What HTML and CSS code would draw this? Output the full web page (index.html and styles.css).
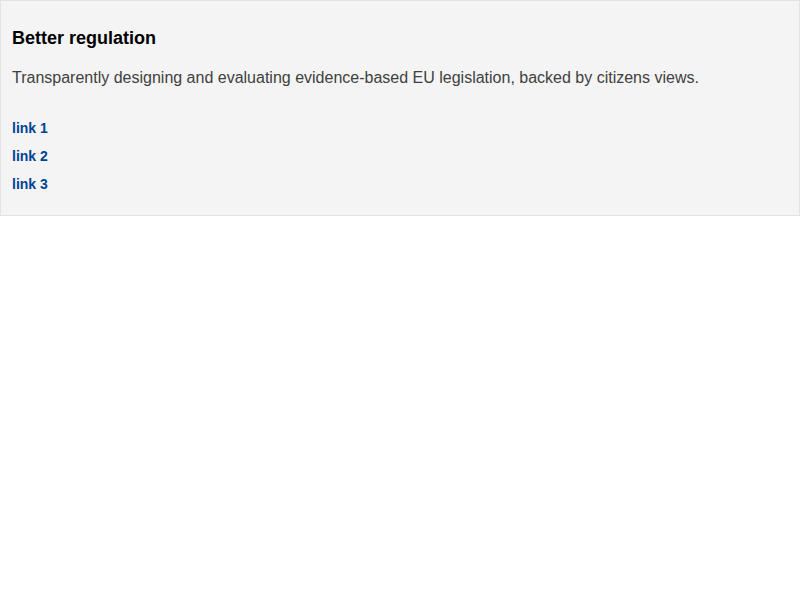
FILE: index.html
```html
<!DOCTYPE html>
<html>
<head>
<meta charset="utf-8">
<link rel="stylesheet" href="styles.css">
</head>
<body>
<div class="card">
  <h2 class="title">Better regulation</h2>
  <p class="desc">Transparently designing and evaluating evidence-based EU legislation, backed by citizens views.</p>
  <ul class="links">
    <li><a href="#">link 1</a></li>
    <li><a href="#">link 2</a></li>
    <li><a href="#">link 3</a></li>
  </ul>
</div>
</body>
</html>
```
FILE: styles.css
```css
html, body {
  margin: 0;
  padding: 0;
  background: #fff;
  font-family: "Liberation Sans", Arial, sans-serif;
}
.card {
  box-sizing: border-box;
  width: 800px;
  height: 216px;
  background: #f4f4f4;
  border: 1px solid #e3e3e3;
  padding: 16px 11px;
}
.title {
  margin: 9px 0 0;
  font-size: 18px;
  line-height: 24px;
  font-weight: bold;
  color: #000;
}
.desc {
  margin: 16px 0 0;
  font-size: 16px;
  line-height: 24px;
  color: #404040;
}
.links {
  list-style: none;
  margin: 28px 0 0;
  padding: 0;
  display: flex;
  flex-direction: column;
  gap: 8px;
}
.links li {
  font-size: 14px;
  line-height: 20px;
}
.links a {
  color: #004494;
  font-weight: bold;
  text-decoration: none;
}
```
